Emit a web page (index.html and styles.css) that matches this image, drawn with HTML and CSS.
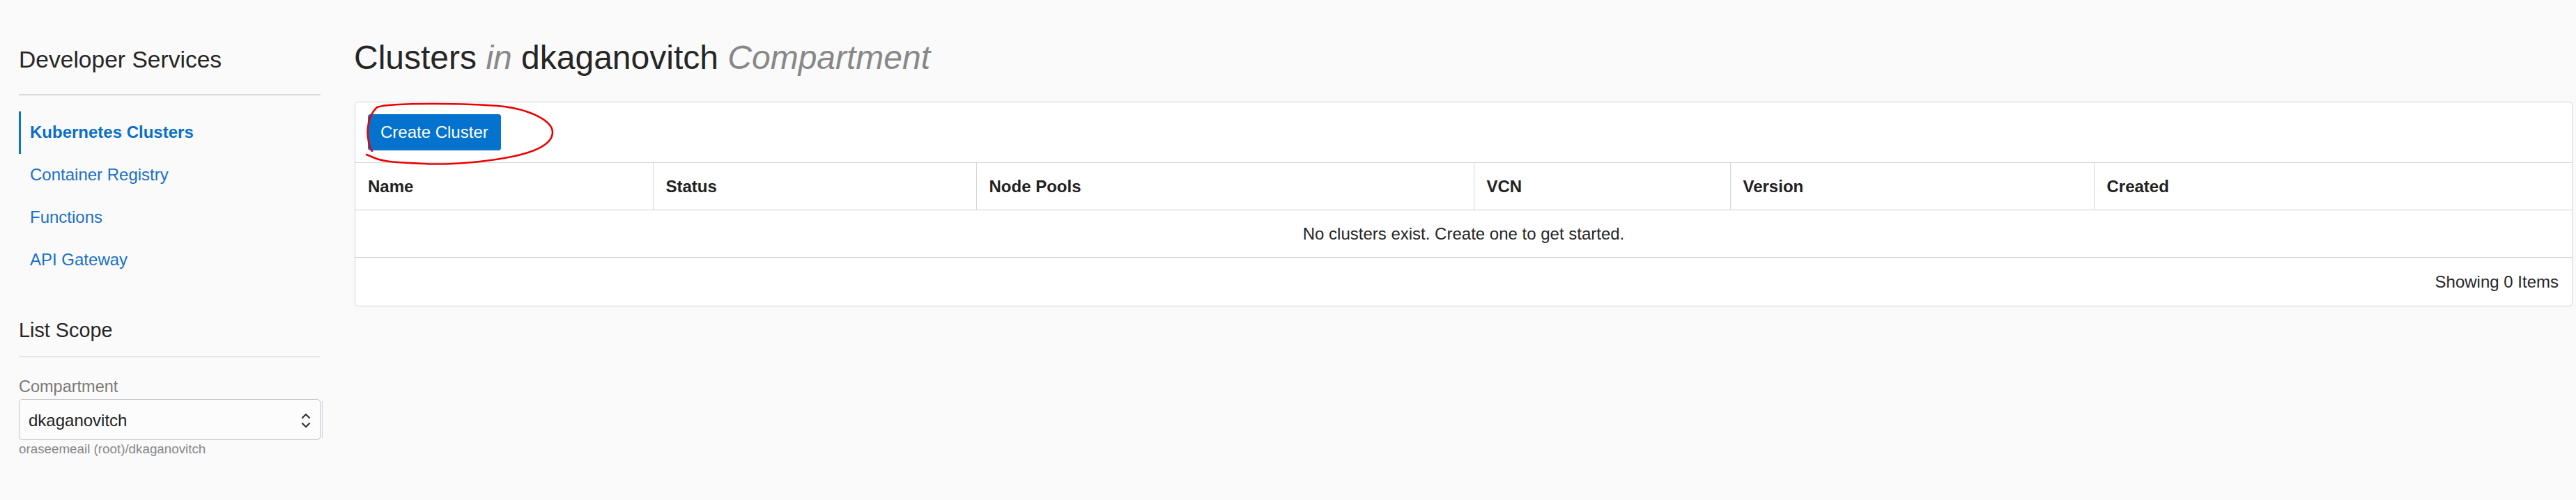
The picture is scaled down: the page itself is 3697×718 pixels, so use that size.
FILE: index.html
```html
<!DOCTYPE html>
<html lang="en">
<head>
<meta charset="utf-8">
<title>Clusters</title>
<link rel="stylesheet" href="styles.css">
</head>
<body>
<div class="page">
  <aside class="sidebar">
    <h2 class="side-title">Developer Services</h2>
    <nav class="side-nav">
      <a class="nav-item active" href="#">Kubernetes Clusters</a>
      <a class="nav-item" href="#">Container Registry</a>
      <a class="nav-item" href="#">Functions</a>
      <a class="nav-item" href="#">API Gateway</a>
    </nav>
    <h2 class="scope-title">List Scope</h2>
    <label class="field-label">Compartment</label>
    <div class="select-row">
      <div class="select">
        <span class="select-value">dkaganovitch</span>
        <svg class="chevrons" width="14" height="24" viewBox="0 0 14 24" aria-hidden="true">
          <path d="M2 8 L7 3 L12 8" fill="none" stroke="#333" stroke-width="2.2" stroke-linecap="round" stroke-linejoin="round"/>
          <path d="M2 16 L7 21 L12 16" fill="none" stroke="#333" stroke-width="2.2" stroke-linecap="round" stroke-linejoin="round"/>
        </svg>
      </div>
      <span class="select-edge"></span>
    </div>
    <div class="field-help">oraseemeail (root)/dkaganovitch</div>
  </aside>

  <main class="main">
    <h1 class="page-title">Clusters <em>in</em> dkaganovitch <em>Compartment</em></h1>
    <section class="panel">
      <div class="toolbar">
        <button class="btn-primary" type="button">Create Cluster</button>
      </div>
      <svg class="annotation" width="285" height="100" viewBox="0 0 285 100" aria-hidden="true">
        <path d="M13,72 C4,55 3,25 20,9 C40,2 150,3 203,8 C245,14 272,30 272,45 C272,64 240,76 203,82 C170,88 120,92 87,90 C60,89 30,88 17,82 L5,77" fill="none" stroke="#ee0000" stroke-width="2.6" stroke-linecap="round" stroke-linejoin="round"/>
      </svg>
      <table class="grid">
        <colgroup>
          <col class="c-name"><col class="c-status"><col class="c-pools"><col class="c-vcn"><col class="c-version"><col class="c-created">
        </colgroup>
        <thead>
          <tr>
            <th>Name</th>
            <th>Status</th>
            <th>Node Pools</th>
            <th>VCN</th>
            <th>Version</th>
            <th>Created</th>
          </tr>
        </thead>
        <tbody>
          <tr class="empty-row">
            <td colspan="6">No clusters exist. Create one to get started.</td>
          </tr>
        </tbody>
      </table>
      <div class="panel-footer">Showing 0 Items</div>
    </section>
  </main>
</div>
</body>
</html>
```

FILE: styles.css
```css
* { box-sizing: border-box; }

html, body {
  margin: 0;
  padding: 0;
  background: #fafafa;
  font-family: "Liberation Sans", Arial, sans-serif;
  color: #262626;
}

.page {
  display: flex;
  align-items: flex-start;
  min-height: 718px;
}

/* ---------- Sidebar ---------- */
.sidebar {
  width: 465px;
  flex: none;
  padding: 66px 0 0 27px;
  display: flex;
  flex-direction: column;
}

.side-title {
  width: 433px;
  margin: 0;
  font-size: 33.6px;
  font-weight: normal;
  line-height: 40px;
  color: #262626;
  padding-bottom: 29px;
  border-bottom: 2px solid #d6dade;
}

.side-nav {
  display: flex;
  flex-direction: column;
  margin-top: 23px;
}

.nav-item {
  display: block;
  height: 61px;
  line-height: 60px;
  padding-left: 13px;
  border-left: 3px solid transparent;
  font-size: 24px;
  color: #1a70c8;
  text-decoration: none;
}

.nav-item.active {
  font-weight: bold;
  color: #0a6fc9;
  border-left-color: #0a72d1;
}

.scope-title {
  width: 433px;
  margin: 53px 0 0;
  font-size: 28.8px;
  font-weight: normal;
  line-height: 34px;
  color: #262626;
  padding-bottom: 21px;
  border-bottom: 1px solid #c4c9ce;
}

.field-label {
  display: block;
  margin-top: 28px;
  font-size: 23.5px;
  line-height: 28px;
  color: #7a7a7a;
}

.select-row {
  display: flex;
  align-items: center;
  margin-top: 4px;
}

.select {
  width: 433px;
  height: 59px;
  border: 1px solid #b9c0c8;
  border-radius: 5px;
  background: #fcfcfc;
  display: flex;
  align-items: center;
  justify-content: space-between;
  padding: 0 13px 0 13px;
}

.select-value {
  font-size: 24px;
  color: #222;
  line-height: 28px;
  padding-top: 2px;
}

.chevrons { display: block; margin-top: 2px; }

.select-edge {
  width: 1px;
  height: 53px;
  margin-left: 2px;
  background: #c6d0db;
}

.field-help {
  margin-top: 2px;
  font-size: 18.8px;
  line-height: 22px;
  color: #888;
}

/* ---------- Main ---------- */
.main {
  flex: 1;
  min-width: 0;
  padding: 55px 5px 0 43px;
}

.page-title {
  margin: 0;
  font-size: 48px;
  font-weight: normal;
  line-height: 56px;
  color: #262626;
}

.page-title em {
  font-style: italic;
  color: #888;
}

.panel {
  position: relative;
  margin-top: 35px;
  margin-left: 1px;
  background: #fff;
  border: 1px solid #cfd3d8;
  border-radius: 4px;
}

.toolbar {
  padding: 17px 18px 17px;
}

.btn-primary {
  display: block;
  height: 52px;
  padding: 0 18px;
  border: 0;
  border-radius: 4px;
  background: #0572ce;
  color: #fff;
  font-family: "Liberation Sans", Arial, sans-serif;
  font-size: 24px;
  line-height: 52px;
}

.annotation {
  position: absolute;
  left: 11px;
  top: -2px;
  pointer-events: none;
}

.grid {
  width: 100%;
  border-collapse: collapse;
  table-layout: fixed;
}

.c-name { width: 427px; }
.c-status { width: 464px; }
.c-pools { width: 714px; }
.c-vcn { width: 368px; }
.c-version { width: 522px; }
.c-created { width: auto; }

.grid th {
  height: 68px;
  padding: 0 18px;
  text-align: left;
  font-size: 24px;
  font-weight: bold;
  color: #222;
  border-top: 1px solid #d3d7dc;
  border-bottom: 1px solid #c8ccd1;
  border-left: 1px solid #d3d7dc;
  vertical-align: middle;
}

.grid th:first-child { border-left: 0; padding-left: 18px; }

.empty-row td {
  height: 68px;
  text-align: center;
  font-size: 24px;
  color: #262626;
  border-bottom: 1px solid #c8ccd1;
  vertical-align: middle;
  padding: 0;
}

.panel-footer {
  height: 69px;
  line-height: 69px;
  text-align: right;
  padding-right: 19px;
  font-size: 24px;
  color: #262626;
}
```
